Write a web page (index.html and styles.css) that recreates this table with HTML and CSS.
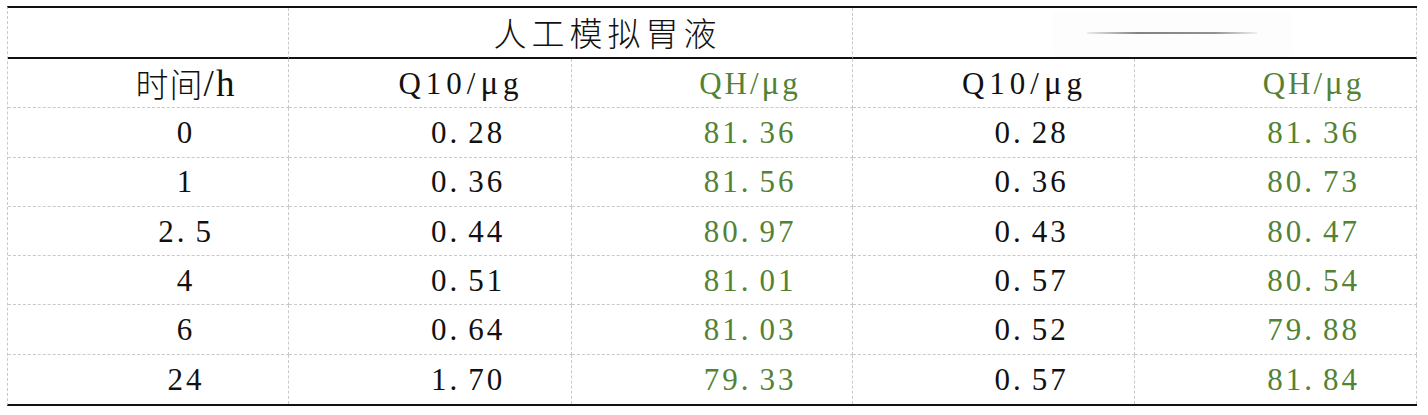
FILE: index.html
```html
<!DOCTYPE html>
<html lang="zh-CN">
<head>
<meta charset="utf-8">
<title>人工模拟胃液</title>
<link rel="stylesheet" href="styles.css">
</head>
<body>
<div class="sheet">
  <div class="cell head"></div>
  <div class="cell head span2"><span class="title">人工模拟胃液</span></div>
  <div class="cell head span2"><span class="smudge"><span class="smudge-line"></span></span></div>

  <div class="cell"><span class="cn">时间</span><span class="unit">/h</span></div>
  <div class="cell wide">Q10/<span class="mu">μ</span>g</div>
  <div class="cell green">QH/<span class="mu">μ</span>g</div>
  <div class="cell wide">Q10/<span class="mu">μ</span>g</div>
  <div class="cell green">QH/<span class="mu">μ</span>g</div>

  <div class="cell">0</div>
  <div class="cell">0<span class="dot">.</span>28</div>
  <div class="cell green">81<span class="dot">.</span>36</div>
  <div class="cell">0<span class="dot">.</span>28</div>
  <div class="cell green">81<span class="dot">.</span>36</div>

  <div class="cell">1</div>
  <div class="cell">0<span class="dot">.</span>36</div>
  <div class="cell green">81<span class="dot">.</span>56</div>
  <div class="cell">0<span class="dot">.</span>36</div>
  <div class="cell green">80<span class="dot">.</span>73</div>

  <div class="cell">2<span class="dot">.</span>5</div>
  <div class="cell">0<span class="dot">.</span>44</div>
  <div class="cell green">80<span class="dot">.</span>97</div>
  <div class="cell">0<span class="dot">.</span>43</div>
  <div class="cell green">80<span class="dot">.</span>47</div>

  <div class="cell">4</div>
  <div class="cell">0<span class="dot">.</span>51</div>
  <div class="cell green">81<span class="dot">.</span>01</div>
  <div class="cell">0<span class="dot">.</span>57</div>
  <div class="cell green">80<span class="dot">.</span>54</div>

  <div class="cell">6</div>
  <div class="cell">0<span class="dot">.</span>64</div>
  <div class="cell green">81<span class="dot">.</span>03</div>
  <div class="cell">0<span class="dot">.</span>52</div>
  <div class="cell green">79<span class="dot">.</span>88</div>

  <div class="cell last">24</div>
  <div class="cell last">1<span class="dot">.</span>70</div>
  <div class="cell last green">79<span class="dot">.</span>33</div>
  <div class="cell last">0<span class="dot">.</span>57</div>
  <div class="cell last green">81<span class="dot">.</span>84</div>
</div>
</body>
</html>
```

FILE: styles.css
```css
html, body {
  margin: 0;
  padding: 0;
  background: #ffffff;
}

body {
  font-family: "Liberation Serif", "Noto Sans CJK SC", serif;
  color: #111111;
}

.sheet {
  display: grid;
  grid-template-columns: 281px 283px 281px 282px 282px;
  grid-template-rows: 51px repeat(7, 49.3px);
  width: max-content;
  margin: 6px 0 0 7px;
  border-top: 2px solid #111;
  border-bottom: 2px solid #111;
  border-left: 1px dashed #c9c9c9;
}

.cell {
  box-sizing: border-box;
  display: flex;
  align-items: center;
  justify-content: center;
  padding-left: 76px;
  border-right: 1px dashed #c9c9c9;
  border-bottom: 1px dashed #c9c9c9;
  font-size: 31px;
  letter-spacing: 3px;
  white-space: nowrap;
  line-height: 1;
}

.cell.head {
  border-bottom: 2px solid #111;
  padding-left: 74px;
}

.cell.last {
  border-bottom: none;
}

.cell.wide {
  letter-spacing: 5px;
  padding-left: 62px;
}

.span2 {
  grid-column: span 2;
}

.green {
  color: #548235;
}

.dot {
  margin-right: 8px;
}

.mu {
  font-size: 33px;
}

.cn {
  font-family: "Noto Sans CJK SC", sans-serif;
  font-size: 33px;
  font-weight: 300;
  letter-spacing: 1px;
}

.unit {
  font-size: 37px;
  letter-spacing: 2px;
}

.title {
  font-family: "Noto Sans CJK SC", sans-serif;
  font-size: 33px;
  letter-spacing: 5px;
  font-weight: 300;
}

.smudge {
  display: flex;
  align-items: center;
  justify-content: center;
  width: 236px;
  height: 42px;
  margin-top: 4px;
  background: #fdfdfd;
  box-shadow: 0 0 2px rgba(0, 0, 0, 0.04);
}

.smudge-line {
  display: block;
  width: 170px;
  height: 2px;
  margin-top: -4px;
  background: linear-gradient(to right, rgba(90, 90, 90, 0.1), rgba(90, 90, 90, 0.75) 30%, rgba(100, 100, 100, 0.7) 75%, rgba(120, 120, 120, 0.1));
}
```
